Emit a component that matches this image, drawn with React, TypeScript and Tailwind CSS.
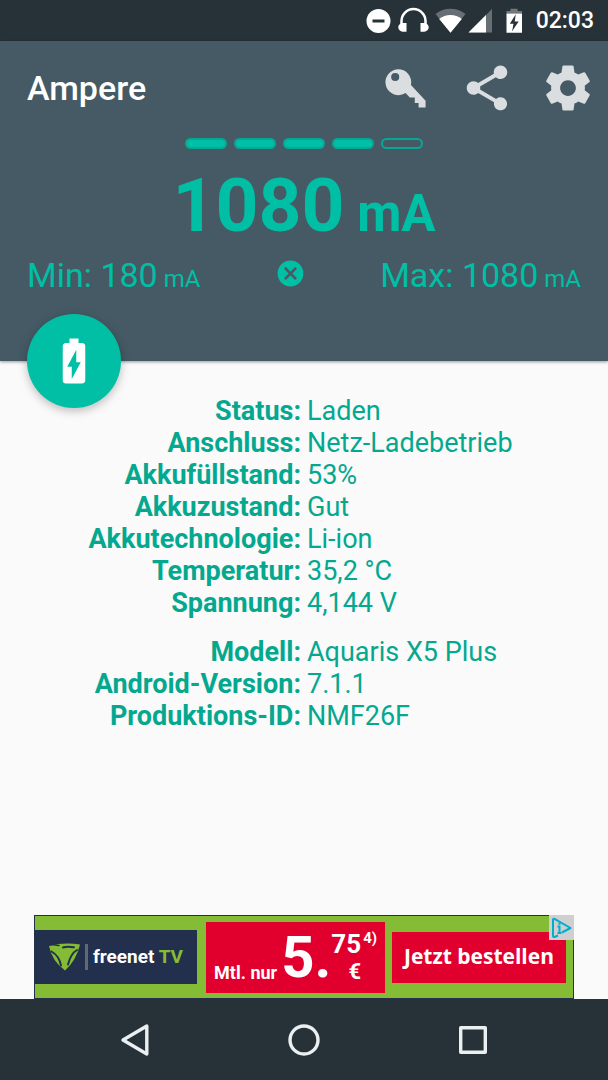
import type { ReactNode } from "react"
import { MdBatteryChargingFull, MdCancel } from "react-icons/md"

const batteryInfo = [
  { label: "Status", value: "Laden" },
  { label: "Anschluss", value: "Netz-Ladebetrieb" },
  { label: "Akkufüllstand", value: "53%" },
  { label: "Akkuzustand", value: "Gut" },
  { label: "Akkutechnologie", value: "Li-ion" },
  { label: "Temperatur", value: "35,2 °C" },
  { label: "Spannung", value: "4,144 V" },
]

const deviceInfo = [
  { label: "Modell", value: "Aquaris X5 Plus" },
  { label: "Android-Version", value: "7.1.1" },
  { label: "Produktions-ID", value: "NMF26F" },
]

const segments = [true, true, true, true, false]

function StatusBar() {
  return (
    <div className="flex h-[41px] items-center justify-end bg-[#263238] pr-3.5 text-white">
      <svg className="h-8 w-40" viewBox="362 4 160 32" fill="currentColor" aria-hidden="true">
        <path
          fillRule="evenodd"
          d="M378.500 8a12 12 0 1 0 0 24a12 12 0 0 0 0-24zM372.500 18.500h12v3h-12z"
        />
        <path
          d="M401.500 24v-4a12 12 0 0 1 24 0v4"
          fill="none"
          stroke="currentColor"
          strokeWidth="2.500"
        />
        <path d="M406.500 22h-2.500c-3.500 0-5.700 1.800-5.700 4.300s2.200 4.500 5.700 4.500h2.500zM420.500 22h2.500c3.500 0 5.700 1.800 5.700 4.300s-2.200 4.500-5.700 4.500h-2.500z" />
        <path d="M450.500 31.800L435.500 13a24 24 0 0 1 30 0z" opacity=".3" />
        <path d="M450.500 31.800L439.200 18a18 18 0 0 1 22.600 0z" />
        <path d="M492 8v23.500h-23.500z" opacity=".3" />
        <path d="M486 14v17.500h-17.500z" />
        <path d="M506.500 12.500v-2.500h4v-2.300h7v2.300h4.500v2.500z" opacity=".35" />
        <path fillRule="evenodd" d="M506.500 12.500h15.500v19.300h-15.500zM515.800 13.300l-6 9.400h3.700l-1.300 7.300l6.500-9.500h-4z" />
      </svg>
      <span className="ml-3.5 text-[23px] leading-7 font-medium">02:03</span>
    </div>
  )
}

function ToolbarButton({ label, children }: { label: string; children: ReactNode }) {
  return (
    <button type="button" aria-label={label} className="flex h-20 w-[81px] items-center justify-center text-[#dadee0]">
      <svg className="size-[54px]" viewBox="0 0 24 24" fill="currentColor" aria-hidden="true">
        {children}
      </svg>
    </button>
  )
}

function Toolbar() {
  return (
    <div className="flex h-[94px] items-center justify-between pl-[27px]">
      <h1 className="text-[34px] leading-10 font-medium text-white">Ampere</h1>
      <div className="flex">
        <ToolbarButton label="Pro-Version">
          <path
            fillRule="evenodd"
            d="M14.200 10.700L20.700 17.700v3h-3.100v-2h-1.700v-2.500h-2.200l-1.900-2a5.750 5.750 0 1 1 2.400-3.500zM7.200 5.300a1.800 1.800 0 1 0 0 3.600a1.800 1.800 0 0 0 0-3.600z"
          />
        </ToolbarButton>
        <ToolbarButton label="Teilen">
          <path d="M18 16.080c-.76 0-1.440.3-1.960.77L8.910 12.700c.05-.23.090-.46.090-.7s-.040-.47-.090-.7l7.050-4.110c.54.5 1.250.81 2.040.81 1.660 0 3-1.340 3-3s-1.340-3-3-3-3 1.340-3 3c0 .24.040.47.090.7L8.040 9.810C7.500 9.310 6.790 9 6 9c-1.660 0-3 1.340-3 3s1.340 3 3 3c.79 0 1.500-.31 2.040-.81l7.120 4.160c-.05.21-.08.43-.08.65 0 1.610 1.310 2.920 2.920 2.920s2.920-1.310 2.920-2.920-1.310-2.920-2.920-2.920z" />
        </ToolbarButton>
        <ToolbarButton label="Einstellungen">
          <path d="M19.430 12.980c.04-.32.07-.64.07-.98s-.03-.66-.07-.98l2.110-1.650c.19-.15.24-.42.12-.64l-2-3.460c-.12-.22-.39-.3-.61-.22l-2.490 1c-.52-.4-1.080-.73-1.690-.98l-.38-2.650C14.460 2.180 14.250 2 14 2h-4c-.25 0-.46.18-.49.42l-.38 2.650c-.61.25-1.170.59-1.690.98l-2.490-1c-.23-.09-.49 0-.61.22l-2 3.460c-.13.22-.07.49.12.64l2.110 1.650c-.04.32-.07.65-.07.98s.03.66.07.98l-2.110 1.650c-.19.15-.24.42-.12.64l2 3.460c.12.22.39.3.61.22l2.490-1c.52.4 1.080.73 1.690.98l.38 2.650c.03.24.24.42.49.42h4c.25 0 .46-.18.49-.42l.38-2.650c.61-.25 1.170-.59 1.690-.98l2.490 1c.23.09.49 0 .61-.22l2-3.460c.12-.22.07-.49-.12-.64l-2.110-1.650zM12 15.500c-1.930 0-3.500-1.570-3.500-3.500s1.570-3.500 3.500-3.500 3.500 1.570 3.500 3.500-1.570 3.500-3.500 3.500z" />
        </ToolbarButton>
      </div>
    </div>
  )
}

function CurrentHeader() {
  return (
    <header className="relative bg-[#455a64] pb-[66px] text-[#00bfa5] shadow-[0_1px_3px_rgba(0,0,0,0.4)]">
      <Toolbar />
      <div className="mt-[3px] flex justify-center gap-[7px]">
        {segments.map((filled, i) => (
          <span
            key={i}
            className={`h-[11px] w-[42px] rounded-full border-2 border-[#07a893] ${filled ? "bg-[#00bfa5]" : ""}`}
          />
        ))}
      </div>
      <p className="mt-3 text-center text-[75px] leading-[88px] font-bold">
        1080<span className="text-[51px] leading-none"> mA</span>
      </p>
      <div className="mt-1.5 flex items-center justify-between px-[27px] text-[34px] leading-10">
        <span>
          Min: 180<span className="text-[24px] leading-none"> mA</span>
        </span>
        <button type="button" aria-label="Zurücksetzen" className="pb-1">
          <MdCancel className="size-[31px]" />
        </button>
        <span>
          Max: 1080<span className="text-[24px] leading-none"> mA</span>
        </span>
      </div>
      <button
        type="button"
        aria-label="Akku"
        className="absolute -bottom-[47px] left-[27px] flex size-[94px] items-center justify-center rounded-full bg-[#00bfa5] text-white shadow-[0_3px_10px_rgba(0,0,0,0.25)]"
      >
        <MdBatteryChargingFull className="size-[54px]" />
      </button>
    </header>
  )
}

function InfoTable({ rows }: { rows: { label: string; value: string }[] }) {
  return (
    <table className="w-full table-fixed text-[27px] leading-8 text-[#04a88f]">
      <tbody>
        {rows.map((row) => (
          <tr key={row.label}>
            <th scope="row" className="w-1/2 p-0 pr-[3px] text-right font-bold">
              {row.label}:
            </th>
            <td className="p-0 pl-[3px]">{row.value}</td>
          </tr>
        ))}
      </tbody>
    </table>
  )
}

function AdBanner() {
  return (
    <aside className="relative mx-auto flex h-[84px] w-full max-w-[540px] items-center border border-[#22304d] bg-[#85bc35] pr-[7px] text-white">
      <div className="flex h-[54px] w-[162px] items-center bg-[#22304d] pl-3.5">
        <svg className="h-7 w-8" viewBox="0 0 32 28" aria-hidden="true">
          <path d="M0 3Q15-1 31 1.500Q27 18 16 27.500Q3 18 0 3z" fill="#85bc35" />
          <g fill="none" stroke="#22304d" strokeLinecap="round">
            <path d="M2.500 8.500c4.500 2.500 8 6.500 9.500 14" strokeWidth="2" />
            <path d="M28 7c-4.500 2.500-7 7-9 14.500" strokeWidth="2" />
            <path d="M14 4.500c3-1.200 7-1 11-.3" strokeWidth="2" />
            <path d="M1 1.500c3.500-.2 6 .5 9 1" strokeWidth="1.500" />
          </g>
        </svg>
        <span className="ml-1 h-6.5 w-[3px] bg-[#5d6b75]" />
        <span className="ml-[5px] text-[19px] leading-6 font-bold whitespace-nowrap">
          freenet <span className="text-[#85bc35]">TV</span>
        </span>
      </div>
      <div className="ml-[9px] flex h-[71px] w-[179px] justify-end bg-[#e1002d] pr-2 font-bold">
        <span className="self-end pb-2 text-[18px] leading-6 whitespace-nowrap">Mtl. nur</span>
        <span className="ml-1 self-center text-[58px] leading-[60px]">5.</span>
        <span className="flex flex-col items-end pt-2">
          <span className="text-[26px] leading-7">75</span>
          <span className="text-[22px] leading-7">€</span>
        </span>
        <span className="ml-0.5 pt-2 text-[15px] leading-4">4)</span>
      </div>
      <a
        href="#bestellen"
        className="ml-[7px] flex h-[51px] flex-1 items-center justify-center bg-[#e1002d] font-['Open_Sans',sans-serif] text-[21px] font-bold whitespace-nowrap"
      >
        Jetzt bestellen
      </a>
      <button
        type="button"
        aria-label="AdChoices"
        className="absolute -top-px -right-px flex size-[25px] items-center justify-center bg-[#cfcfcf] text-[#00aecd]"
      >
        <svg className="size-[22px]" viewBox="0 0 22 22" fill="none" stroke="currentColor" strokeWidth="2" aria-hidden="true">
          <path d="M7 18.500l-3.500 1.500c-.8.3-1.500 0-1.500-1V2.800c0-1 .7-1.300 1.500-.9L19.500 11L11 15.500" strokeLinejoin="round" />
          <path d="M6.500 9.500h2v6.500M6.500 16h4M8.500 5.500v2.200" />
        </svg>
      </button>
    </aside>
  )
}

function NavButton({ label, children }: { label: string; children: ReactNode }) {
  return (
    <button type="button" aria-label={label} className="flex flex-1 items-center justify-center text-[#eceff1]">
      <svg
        className="size-9"
        viewBox="0 0 36 36"
        fill="none"
        stroke="currentColor"
        strokeWidth="3.400"
        strokeLinejoin="round"
        aria-hidden="true"
      >
        {children}
      </svg>
    </button>
  )
}

function NavigationBar() {
  return (
    <nav className="flex h-[81px] bg-[#263238] px-[51px]">
      <NavButton label="Zurück">
        <path d="M6 18L29.800 4v28z" />
      </NavButton>
      <NavButton label="Startseite">
        <circle cx="18" cy="18" r="14" />
      </NavButton>
      <NavButton label="Übersicht">
        <path d="M5.700 5.700h24.600v24.600H5.700z" />
      </NavButton>
    </nav>
  )
}

export default function App() {
  return (
    <div className="flex min-h-screen flex-col bg-[#fafafa] font-[Roboto,sans-serif]">
      <StatusBar />
      <CurrentHeader />
      <main className="flex flex-1 flex-col">
        <div className="flex flex-col gap-[17px] pt-[34px] pb-6">
          <InfoTable rows={batteryInfo} />
          <InfoTable rows={deviceInfo} />
        </div>
        <div className="mt-auto px-[34px]">
          <AdBanner />
        </div>
      </main>
      <NavigationBar />
    </div>
  )
}
